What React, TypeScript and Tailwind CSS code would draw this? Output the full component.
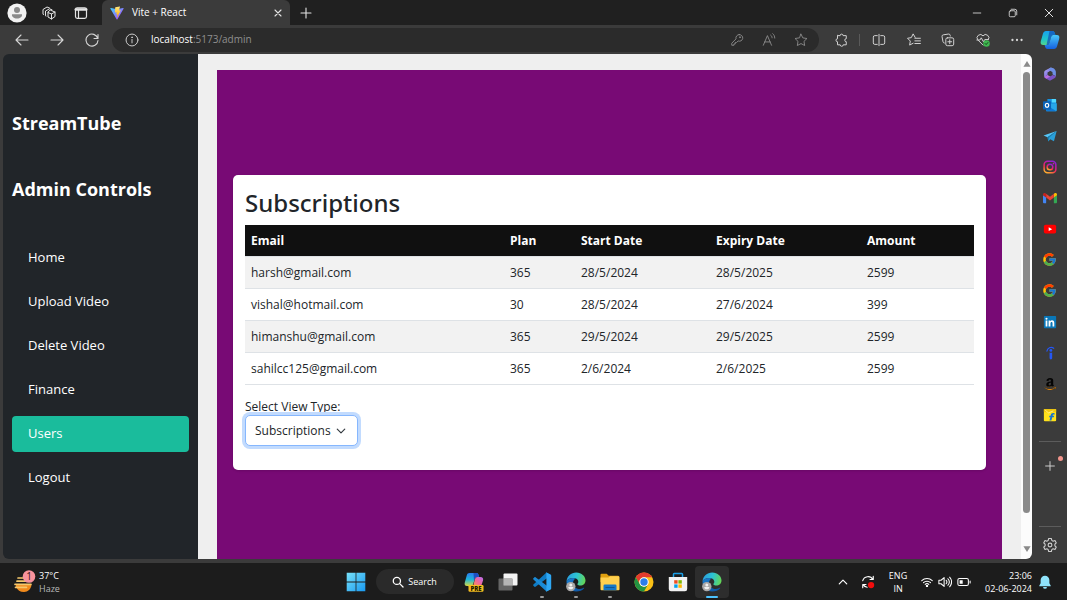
import { useState } from "react";
import type { ReactNode } from "react";
import { FcGoogle } from "react-icons/fc";
import { FaAmazon } from "react-icons/fa";

const navItems = ["Home", "Upload Video", "Delete Video", "Finance", "Users", "Logout"];

const subscriptions = [
  { email: "harsh@gmail.com", plan: "365", start: "28/5/2024", expiry: "28/5/2025", amount: "2599" },
  { email: "vishal@hotmail.com", plan: "30", start: "28/5/2024", expiry: "27/6/2024", amount: "399" },
  { email: "himanshu@gmail.com", plan: "365", start: "29/5/2024", expiry: "29/5/2025", amount: "2599" },
  { email: "sahilcc125@gmail.com", plan: "365", start: "2/6/2024", expiry: "2/6/2025", amount: "2599" },
];

/* ---------- line icons ---------- */

function Line({ children, className = "size-4", width = 1.1 }: { children: ReactNode; className?: string; width?: number }) {
  return (
    <svg viewBox="0 0 16 16" className={className} fill="none" stroke="currentColor" strokeWidth={width} strokeLinecap="round" strokeLinejoin="round" aria-hidden="true">
      {children}
    </svg>
  );
}

const AvatarIcon = () => (
  <svg viewBox="0 0 20 20" className="size-5" aria-hidden="true">
    <circle cx="10" cy="10" r="9.6" fill="#f2f2f2" />
    <circle cx="10" cy="7" r="3" fill="#8a8a8a" />
    <path d="M5 11.2h10c.4 2.600-1.800 4.300-5 4.300s-5.400-1.700-5-4.300z" fill="#8a8a8a" />
  </svg>
);

const WorkspacesIcon = () => (
  <Line width={1}>
    <path d="M9.500 5.200 14 7v4.500L10.500 14 7 12V7.500z" />
    <path d="M7 7.500 10.500 9 14 7M10.500 9v5" />
    <path d="M5 11 4.500 10.800V6L8.500 3.800l2.500 1M2.500 9.500 2 9.200V4.500L6 2l2.500 1" />
  </Line>
);

const TabActionsIcon = () => (
  <Line width={1.2}>
    <rect x="2.500" y="2.800" width="11" height="10.500" rx="1.800" />
    <path d="M2.800 4.500h10.400" strokeWidth="2.600" />
    <path d="M5.500 5v8" />
  </Line>
);

const ViteIcon = () => (
  <svg viewBox="0 0 32 32" className="size-3.5" aria-hidden="true">
    <defs>
      <linearGradient id="viteA" x1="0" y1="0" x2="1" y2="1">
        <stop offset="0" stopColor="#41d1ff" />
        <stop offset="1" stopColor="#bd34fe" />
      </linearGradient>
      <linearGradient id="viteB" x1="0" y1="0" x2="0" y2="1">
        <stop offset="0" stopColor="#ffea83" />
        <stop offset="1" stopColor="#ffa800" />
      </linearGradient>
    </defs>
    <path d="M31 6.500 17 30.300a1.100 1.100 0 0 1-2 0L1 6.500c-.5-.9.300-1.900 1.200-1.700l13.800 2.400 13.700-2.400c1-.2 1.800.8 1.300 1.700z" fill="url(#viteA)" />
    <path d="M22.500 1 12.300 3a.5.5 0 0 0-.4.400l-.6 11c0 .3.200.5.500.4l2.900-.7c.3 0 .5.200.5.500l-.9 4.300c0 .3.200.5.500.4l1.800-.5c.3-.1.500.1.500.4l-1.400 6.900c-.1.400.5.700.7.300l8-16c.1-.3-.1-.6-.4-.5l-2.900.5c-.3 0-.5-.2-.4-.5L22.900 1.400c0-.3-.1-.5-.4-.4z" fill="url(#viteB)" />
  </svg>
);

/* ---------- brand icons for the side bar ---------- */

const M365Icon = () => (
  <svg viewBox="0 0 16 16" className="size-3.5" aria-hidden="true">
    <defs>
      <linearGradient id="m365a" x1="0" y1="0" x2="1" y2="1">
        <stop offset="0" stopColor="#b8a5f5" />
        <stop offset="1" stopColor="#5b5fd6" />
      </linearGradient>
    </defs>
    <path d="M9 .6 3 3.600C1.800 4.300 1.300 5.200 1.300 6.500v4.800l4-2.300V6.200L12 2.300z" fill="url(#m365a)" />
    <path d="M9 .6c2.500.4 5.700 2 5.700 5v5L10.700 8.200V5.800L6 3.200z" fill="#6d8fe6" />
    <path d="M14.700 10.300c0 1-.5 1.700-1.300 2.200L9 15.200c-.8.400-1.600.3-2.300-.1l-4.600-2.700c-.5-.3-.8-.7-.8-1.300L5.300 9l2.900 1.700L10.700 9z" fill="#7a52c7" />
    <path d="M1.300 11.200 5.300 9l3 1.800-4.600 2.600z" fill="#b86fe0" />
    <path d="M5.500 6.400 8 5l2.600 1.400v2.800L8 10.600 5.500 9.200z" fill="#3b3b3b" />
  </svg>
);

const OutlookIcon = () => (
  <svg viewBox="0 0 16 16" className="size-3.5" aria-hidden="true">
    <path d="M5 1h9a1 1 0 0 1 1 1v6H5z" fill="#1490df" />
    <path d="M10 1h4a1 1 0 0 1 1 1v3h-5z" fill="#50d9ff" />
    <path d="M3.500 7 15.800 6v8a1.200 1.200 0 0 1-1.200 1.200H4.500a1 1 0 0 1-1-1z" fill="#28a8ea" />
    <path d="m3.500 8 12 7H4.500a1 1 0 0 1-1-1z" fill="#0f78d4" />
    <rect y="3.800" width="9.200" height="9.200" rx="1" fill="#0a63b8" />
    <ellipse cx="4.600" cy="8.400" rx="2" ry="2.200" fill="none" stroke="#fff" strokeWidth="1.400" />
  </svg>
);

const TelegramIcon = () => (
  <svg viewBox="0 0 16 16" className="size-3.5" aria-hidden="true">
    <path d="M15.600 2.200.6 7.500l4.600 1.800z" fill="#56c5f5" />
    <path d="m5.200 9.300.8 4.900 2.300-2.500 4.200 2.200 3.100-11.700z" fill="#2a9fd8" />
    <path d="M15.600 2.200 6.800 10 6 14.200l-.8-4.900z" fill="#1679ab" />
  </svg>
);

const InstagramIcon = () => (
  <svg viewBox="0 0 16 16" className="size-3.5" aria-hidden="true">
    <defs>
      <linearGradient id="insta" x1="0.200" y1="1" x2="0.700" y2="0">
        <stop offset="0" stopColor="#ffb52e" />
        <stop offset="0.350" stopColor="#f5384a" />
        <stop offset="0.650" stopColor="#d0199a" />
        <stop offset="1" stopColor="#8b22d6" />
      </linearGradient>
    </defs>
    <g fill="none" stroke="url(#insta)" strokeWidth="1.700">
      <rect x="1.300" y="1.300" width="13.400" height="13.400" rx="4" />
      <circle cx="8" cy="8" r="3.200" />
    </g>
    <circle cx="12" cy="4" r="1" fill="#c41fb0" />
  </svg>
);

const GmailIcon = () => (
  <svg viewBox="0 0 16 16" className="size-3.5" aria-hidden="true">
    <path d="M0 4.500 3.600 7v7H1.100A1.100 1.100 0 0 1 0 12.900z" fill="#4285f4" />
    <path d="M16 4.500 12.400 7v7h2.500a1.100 1.100 0 0 0 1.100-1.100z" fill="#34a853" />
    <path d="m12.400 3.200.9-.7c1.100-.8 2.700 0 2.700 1.400v.9l-3.600 2.700z" fill="#fbbc04" />
    <path d="M3.600 7.500V3.200L8 6.500l4.400-3.300v4.300L8 10.800z" fill="#ea4335" />
    <path d="M0 3.900v.9l3.600 2.700V3.200l-.9-.7C1.600 1.700 0 2.500 0 3.900z" fill="#c5221f" />
  </svg>
);

const YoutubeIcon = () => (
  <svg viewBox="0 0 16 16" className="size-3.5" aria-hidden="true">
    <rect x="1" y="3.200" width="14" height="10" rx="2" fill="#f00" />
    <path d="m6.500 6 4 2.200-4 2.200z" fill="#fff" />
  </svg>
);

const LinkedinIcon = () => (
  <svg viewBox="0 0 16 16" className="size-3.5" aria-hidden="true">
    <rect x="1" y="1" width="14" height="14" rx="1" fill="#0a77b8" />
    <circle cx="4" cy="4.200" r="1.200" fill="#fff" />
    <path d="M3 6.300h2V13H3zM6.400 6.300h1.900v.9c.4-.7 1.100-1.100 2-1.100 2 0 2.600 1.200 2.600 3.100V13h-2V9.600c0-1-.2-1.700-1.100-1.700s-1.300.7-1.300 1.700V13H6.400z" fill="#fff" />
  </svg>
);

const IndeedIcon = () => (
  <svg viewBox="0 0 16 16" className="size-3.5" aria-hidden="true">
    <path d="M4.500 5.800C5 2.500 9 .3 12.300 2.600" fill="none" stroke="#2557f5" strokeWidth="1.300" strokeLinecap="round" />
    <circle cx="9" cy="5" r="1.600" fill="#2557f5" />
    <path d="M7.500 7.500c.9.400 2.100.4 3 0v6.300a1.500 1.500 0 0 1-3 0z" fill="#2557f5" />
  </svg>
);

const AmazonIcon = () => (
  <span className="relative block size-3.5">
    <FaAmazon className="size-3.5 text-[#050505]" />
    <FaAmazon className="absolute inset-0 size-3.5 text-[#d98514] [clip-path:inset(74%_0_0_0)]" />
  </span>
);

const FlipkartIcon = () => (
  <svg viewBox="0 0 16 16" className="size-3.5" aria-hidden="true">
    <path d="M1 1.500h14V14a1.200 1.200 0 0 1-1.200 1.200H2.200A1.200 1.200 0 0 1 1 14z" fill="#ffe11b" />
    <path d="M1 1.500h14v3.300H1z" fill="#f3c80e" />
    <path d="m2.500 2.500 3.800 3 5.500-2.200" fill="none" stroke="#fff3a0" strokeWidth="0.900" />
    <path d="M13 5.800h-1.500c-1.500 0-2.300.8-2.600 2.200l-.2.900H7.300L7 10.500h1.400l-1 3.900h2.200l1-3.900h1.800l.4-1.600H11l.1-.6c.1-.5.400-.8.900-.8h1.500z" fill="#1673d1" />
  </svg>
);

const CopilotIcon = () => (
  <svg viewBox="0 0 20 20" className="size-5" aria-hidden="true">
    <defs>
      <linearGradient id="cop1" x1="0.200" y1="0" x2="0.200" y2="1">
        <stop offset="0" stopColor="#18a0f0" />
        <stop offset="0.600" stopColor="#20c5c8" />
        <stop offset="1" stopColor="#54d68b" />
      </linearGradient>
      <linearGradient id="cop2" x1="0.500" y1="0" x2="0.500" y2="1">
        <stop offset="0" stopColor="#48c8fa" />
        <stop offset="1" stopColor="#1560e0" />
      </linearGradient>
    </defs>
    <path d="M6 1h6.500c1.300 0 1.900.8 2.300 2l.6 2h-1.700c-1.400 0-2.200.6-2.600 2l-1.700 5.500C9 14 8.200 15 6.500 15H3.200C1 15 .2 13.300.8 11.200L3 3.500C3.500 1.900 4.500 1 6 1z" fill="url(#cop1)" />
    <path d="M14 19H7.500c-1.300 0-1.900-.8-2.300-2l-.6-2h1.900c1.700 0 2.500-.9 3-2.500L11.100 7c.4-1.400 1.200-2 2.600-2h3.100c2.200 0 3 1.700 2.400 3.800L17 16.500c-.5 1.600-1.500 2.500-3 2.500z" fill="url(#cop2)" />
    <path d="M9.500 1h3c1.300 0 1.900.8 2.300 2l.6 2h-1.700c-1.400 0-2.200.6-2.600 2L8.800 14c-.5.700-1.200 1-2.300 1z" fill="#1453b8" fillOpacity="0.750" />
  </svg>
);

/* ---------- task bar icons ---------- */

const HazeIcon = () => (
  <svg viewBox="0 0 24 24" className="size-6" aria-hidden="true">
    <path d="M4 15h15.500c-.6 4-3.500 7-7.500 7s-6.500-2-8-5z" fill="#f08a1c" />
    <g fill="none" stroke="#f5c76b" strokeWidth="1.700" strokeLinecap="round">
      <path d="M6 8h7M5 11.200h9M3 14.300h16M3.500 17.300h11" />
    </g>
    <circle cx="17" cy="6.500" r="6.300" fill="#f8929d" />
    <text x="17" y="10" textAnchor="middle" fontSize="10" fill="#3a1218" fontFamily="Open Sans, sans-serif">1</text>
  </svg>
);

const WindowsIcon = () => (
  <svg viewBox="0 0 20 20" className="size-5" aria-hidden="true">
    <defs>
      <linearGradient id="win" x1="0" y1="0" x2="20" y2="20" gradientUnits="userSpaceOnUse">
        <stop offset="0" stopColor="#7be4fa" />
        <stop offset="1" stopColor="#1496f0" />
      </linearGradient>
    </defs>
    <path d="M.7.700h8.900v8.900H.7zM10.400.7h8.900v8.900h-8.900zM.7 10.400h8.900v8.900H.7zM10.400 10.400h8.900v8.900h-8.900z" fill="url(#win)" />
  </svg>
);

const CopilotPreIcon = () => (
  <svg viewBox="0 0 20 20" className="size-5" aria-hidden="true">
    <defs>
      <linearGradient id="pre1" x1="0" y1="0" x2="0" y2="1">
        <stop offset="0" stopColor="#2a7cf0" />
        <stop offset="0.500" stopColor="#1fb6d8" />
        <stop offset="1" stopColor="#d5d942" />
      </linearGradient>
      <linearGradient id="pre2" x1="1" y1="0" x2="0" y2="1">
        <stop offset="0" stopColor="#b76bf5" />
        <stop offset="0.500" stopColor="#f0699a" />
        <stop offset="1" stopColor="#f99a4b" />
      </linearGradient>
    </defs>
    <path d="M5.500 1h7c1.200 0 1.800.8 2.100 2l.5 2h-2c-1.200 0-2 .7-2.400 2l-1.500 5c-.4 1.300-1.200 2-2.500 2H3C1 14 .2 12.500.8 10.600l2-7.400C3.200 1.900 4.200 1 5.500 1z" fill="url(#pre1)" />
    <path d="M9.500 1h3c1.200 0 1.800.8 2.100 2l.5 2h-2c-1.200 0-2 .7-2.400 2l-.7 2z" fill="#1d4fc4" />
    <path d="M9 14.500 11 7c.4-1.300 1.200-2 2.500-2h3c2.200 0 3 1.500 2.500 3.400l-2 6.100z" fill="url(#pre2)" />
    <rect x="4.500" y="13" width="15" height="6.800" rx="1.200" fill="#f5bd1f" />
    <text x="12" y="18.700" textAnchor="middle" fontSize="6" fontWeight="800" fill="#241b00" fontFamily="Open Sans, sans-serif">PRE</text>
  </svg>
);

const TaskViewIcon = () => (
  <svg viewBox="0 0 20 20" className="size-5" aria-hidden="true">
    <rect x="5.500" y="1.500" width="14" height="12" rx="1" fill="#f4f4f4" />
    <rect x="0.500" y="6.500" width="14" height="12" rx="1" fill="#6e6e6e" fillOpacity="0.900" />
    <path d="M5.500 6.500h9v7h-9z" fill="#b5b5b5" />
  </svg>
);

const VsCodeIcon = () => (
  <svg viewBox="0 0 20 20" className="size-5" aria-hidden="true">
    <path d="M14.500.6 1.400 12.500a.8.800 0 0 0 0 1.200l1.100 1c.3.300.7.300 1 .1L19 3.200z" fill="#0f7cc5" />
    <path d="M14.500 19.400 1.400 7.500a.8.800 0 0 1 0-1.200l1.100-1c.3-.3.700-.3 1-.1L19 16.800z" fill="#1a8ad6" />
    <path d="M14.500 19.500c-.5.200-1 .1-1.300-.3.500.4 1.200.1 1.200-.5V1.300c0-.6-.7-.9-1.200-.5.300-.4.800-.5 1.300-.3l4 1.900c.4.200.7.600.7 1.100v13c0 .5-.3.900-.7 1.100z" fill="#2fa8f4" />
  </svg>
);

const EdgeIcon = ({ id }: { id: string }) => (
  <svg viewBox="0 0 20 20" className="size-5" aria-hidden="true">
    <defs>
      <linearGradient id={`${id}a`} x1="0" y1="0.300" x2="1" y2="0.500">
        <stop offset="0" stopColor="#2b9be0" />
        <stop offset="0.500" stopColor="#2cc4d3" />
        <stop offset="1" stopColor="#63d657" />
      </linearGradient>
      <linearGradient id={`${id}b`} x1="0" y1="0" x2="1" y2="1">
        <stop offset="0" stopColor="#1b7fd0" />
        <stop offset="1" stopColor="#0c4f9c" />
      </linearGradient>
    </defs>
    <path d="M.5 9.500C1 4 5 .5 10.200.5c5.500 0 9.300 3.800 9.300 8 0 3-2.300 5-5.200 5-1.900 0-2.900-.7-2.900-1.300 0-.5.900-.9.900-2.400C12.300 7.500 10 6 7.200 6 3.800 6 1.300 7.500.5 9.500z" fill={`url(#${id}a)`} />
    <path d="M.5 9.500C1.300 7.300 4 6 7.200 6c1 0 2 .2 2.800.6-1.800.5-3 2.300-3 4.600 0 3.800 3.500 6 7 5.700 1.500-.1 2.700-.6 3.700-1.200.4-.2.700.1.400.5C16.500 18.300 13.500 19.500 10.300 19.500 4.800 19.500.5 15 .5 9.500z" fill={`url(#${id}b)`} />
    <circle cx="4.800" cy="14.600" r="4.700" fill="#aaa8a8" />
    <circle cx="4.800" cy="13" r="1.500" fill="#f0f0f0" />
    <path d="M2.300 15h5c.1 1.600-1 2.300-2.500 2.300S2.200 16.600 2.300 15z" fill="#f0f0f0" />
  </svg>
);

const FolderIcon = () => (
  <svg viewBox="0 0 20 20" className="size-5" aria-hidden="true">
    <path d="M.5 2.800A1 1 0 0 1 1.500 1.800h5.200l2 2H18a1 1 0 0 1 1 1V10H.5z" fill="#e0a010" />
    <path d="M.5 5.500h8L10 4.200h8.500a1 1 0 0 1 1 1v12a1 1 0 0 1-1 1h-17a1 1 0 0 1-1-1z" fill="#ffd04f" />
    <path d="M3.500 18.200v-4.500a1.200 1.200 0 0 1 1.200-1.200h10.600a1.200 1.200 0 0 1 1.200 1.200v4.500z" fill="#1478c8" />
    <path d="M5.500 15.500h9" stroke="#0d5596" strokeWidth="1" />
  </svg>
);

const ChromeIcon = () => (
  <svg viewBox="0 0 20 20" className="size-5" aria-hidden="true">
    <circle cx="10" cy="10" r="9.500" fill="#fbc116" />
    <path d="M10 .5a9.500 9.500 0 0 1 8.230 4.750H10A4.750 4.750 0 0 0 5.890 12.370L1.770 5.250A9.500 9.500 0 0 1 10 .5z" fill="#e33b2e" />
    <path d="M1.770 5.250 5.890 12.370A4.750 4.750 0 0 0 14.110 12.370L10 19.500A9.500 9.500 0 0 1 1.770 5.250z" fill="#229342" />
    <circle cx="10" cy="10" r="4.750" fill="#fff" />
    <circle cx="10" cy="10" r="3.700" fill="#2b7de9" />
  </svg>
);

const StoreIcon = () => (
  <svg viewBox="0 0 20 20" className="size-5" aria-hidden="true">
    <path d="M5.500 5.500V2.200c0-.5.300-.8.800-.8h7.400c.5 0 .8.300.8.800v3.300" fill="none" stroke="#1aa0e8" strokeWidth="1.500" />
    <path d="M.8 5h18.400v12a2.200 2.200 0 0 1-2.200 2.200H3A2.200 2.200 0 0 1 .8 17z" fill="#f2f2f2" />
    <path d="M6.200 8.200h3.400v3.400H6.200z" fill="#f04e1f" />
    <path d="M10.400 8.200h3.400v3.400h-3.400z" fill="#7cb800" />
    <path d="M6.200 12.400h3.400v3.400H6.200z" fill="#00a3ee" />
    <path d="M10.400 12.400h3.400v3.400h-3.400z" fill="#fdb700" />
  </svg>
);

/* ---------- browser chrome ---------- */

function IconButton({ label, className = "", children }: { label: string; className?: string; children: ReactNode }) {
  return (
    <button type="button" aria-label={label} className={`flex shrink-0 items-center justify-center ${className}`}>
      {children}
    </button>
  );
}

function TitleBar() {
  return (
    <header className="flex h-[25px] shrink-0 items-stretch bg-[#202020] text-[#e4e4e4]">
      <div className="flex w-[102px] items-center">
        <IconButton label="Profile" className="w-[34px]"><AvatarIcon /></IconButton>
        <IconButton label="Workspaces" className="w-[30px]"><WorkspacesIcon /></IconButton>
        <IconButton label="Tab actions" className="w-[34px]"><TabActionsIcon /></IconButton>
      </div>
      <div className="flex w-[188px] items-center gap-2 rounded-t-md bg-[#3b3b3b] pr-1 pl-2">
        <ViteIcon />
        <span className="flex-1 text-[10px] text-white">Vite + React</span>
        <IconButton label="Close tab" className="w-4">
          <Line className="size-3" width={1.500}><path d="m4 4 8 8M12 4l-8 8" /></Line>
        </IconButton>
      </div>
      <IconButton label="New tab" className="w-8">
        <Line><path d="M8 3v10M3 8h10" /></Line>
      </IconButton>
      <div className="ml-auto flex">
        <IconButton label="Minimize" className="w-9"><Line className="size-3"><path d="M3 8h10" /></Line></IconButton>
        <IconButton label="Restore" className="w-9">
          <Line className="size-3"><rect x="3" y="5" width="8" height="8" rx="1.500" /><path d="M5.500 3h5A2.500 2.500 0 0 1 13 5.500v5" /></Line>
        </IconButton>
        <IconButton label="Close" className="w-9"><Line className="size-3" width={1.300}><path d="m3 3 10 10M13 3 3 13" /></Line></IconButton>
      </div>
    </header>
  );
}

function Toolbar() {
  return (
    <div className="flex h-[29px] shrink-0 items-center pl-1 text-[#d6d6d6]">
      <IconButton label="Back" className="w-[35px]"><Line><path d="M14 8H2M7 3 2 8l5 5" /></Line></IconButton>
      <IconButton label="Forward" className="w-[35px]"><Line><path d="M2 8h12M9 3l5 5-5 5" /></Line></IconButton>
      <IconButton label="Refresh" className="w-[35px]">
        <Line><path d="M13.800 6.500A6 6 0 1 0 14 8.500M14 2.500v4h-4" /></Line>
      </IconButton>
      <form className="ml-[3px] flex h-6 flex-1 items-center rounded-full bg-[#2b2b2b] text-[#8f8f8f]" onSubmit={(e) => e.preventDefault()}>
        <IconButton label="Site information" className="w-[39px] text-[#cfcfcf]">
          <Line className="size-3.5"><circle cx="8" cy="8" r="6.800" /><path d="M8 7.300v4" /><circle cx="8" cy="4.900" r="0.400" fill="currentColor" /></Line>
        </IconButton>
        <a href="#admin" className="flex-1 text-[10px] whitespace-nowrap">
          <span className="text-white">localhost</span>:5173/admin
        </a>
        <IconButton label="Saved passwords" className="w-8">
          <Line className="size-3.5" width={1}><path d="M10.500 1.800a3.800 3.800 0 1 1-1.200 7.300L7.500 10.800H6v1.700H4.500V14H2v-2.300L6.900 6.700a3.800 3.800 0 0 1 3.600-4.900z" /><circle cx="11.300" cy="4.800" r="0.500" /></Line>
        </IconButton>
        <IconButton label="Read aloud" className="w-8">
          <Line className="size-3.5" width={1}><path d="m1.500 14 4.700-11 4.700 11M3.100 10.200h6.200M10 2.500c1 .8 1.500 1.800 1.500 3M12.300.8c1.500 1.200 2.300 3 2.300 5" /></Line>
        </IconButton>
        <IconButton label="Add to favorites" className="mr-0.5 w-8">
          <Line className="size-3.5" width={1}><path d="m8 1.300 2.100 4.300 4.700.7-3.400 3.300.8 4.700L8 12.100l-4.200 2.200.8-4.700L1.200 6.300l4.700-.7z" /></Line>
        </IconButton>
      </form>
      <div className="flex items-center">
        <IconButton label="Extensions" className="w-10 pl-1">
          <Line className="size-3.5"><path d="M5 3h2a1.700 1.700 0 1 1 3.400 0H14v3.500a1.700 1.700 0 1 0 0 3.400V13.500h-3.500a1.700 1.700 0 0 1-3.400 0H4V10a1.700 1.700 0 1 1 0-3.400V3z" /></Line>
        </IconButton>
        <span className="h-3 w-px bg-[#5a5a5a]" />
        <IconButton label="Split screen" className="w-[37px]">
          <Line className="size-3.5"><path d="M6 3H3.200A1.700 1.700 0 0 0 1.500 4.700v6.600A1.700 1.700 0 0 0 3.200 13H6M10 3h2.800a1.700 1.700 0 0 1 1.700 1.700v6.600a1.700 1.700 0 0 1-1.700 1.700H10M8 1.500v13" /></Line>
        </IconButton>
        <IconButton label="Favorites" className="w-[34px]">
          <Line className="size-3.5"><path d="M9.300 5 7 1 4.900 5.300.6 6l3.200 3.200-.8 4.600 4-2.100M9 6h6.300M9 9h6.300M9 12h6.300" /></Line>
        </IconButton>
        <IconButton label="Collections" className="w-[34px]">
          <Line className="size-3.5"><rect x="5.500" y="5.500" width="9" height="9" rx="1.800" /><path d="M10 7.800v4.400M7.800 10h4.400M3.800 11.500A1.800 1.800 0 0 1 2.300 10L1.200 4.200A1.800 1.800 0 0 1 2.700 2.100L8.500 1.200a1.800 1.800 0 0 1 2 1.500l.1.800" /></Line>
        </IconButton>
        <IconButton label="Browser essentials" className="w-[35px]">
          <svg viewBox="0 0 16 16" className="size-3.5" fill="none" stroke="currentColor" strokeWidth="1.100" strokeLinecap="round" strokeLinejoin="round" aria-hidden="true">
            <path d="M8 13.800 2 7.800a3.600 3.600 0 0 1 6-4.500 3.600 3.600 0 0 1 6 4.500M1 8h3.500L6 5.500 8.500 10 10 7.500h4" />
            <circle cx="12" cy="12" r="3.700" fill="#3fb950" stroke="none" />
            <path d="m10.400 12 1.200 1.200 2-2.300" stroke="#173d1d" />
          </svg>
        </IconButton>
        <IconButton label="Settings and more" className="w-[33px]">
          <svg viewBox="0 0 16 16" className="size-3.5" fill="currentColor" aria-hidden="true"><circle cx="2.800" cy="8" r="1.300" /><circle cx="8" cy="8" r="1.300" /><circle cx="13.200" cy="8" r="1.300" /></svg>
        </IconButton>
        <IconButton label="Copilot" className="w-[34px]"><CopilotIcon /></IconButton>
      </div>
    </div>
  );
}

const sideApps = [
  { label: "Microsoft 365", icon: <M365Icon /> },
  { label: "Outlook", icon: <OutlookIcon /> },
  { label: "Telegram", icon: <TelegramIcon /> },
  { label: "Instagram", icon: <InstagramIcon /> },
  { label: "Gmail", icon: <GmailIcon /> },
  { label: "YouTube", icon: <YoutubeIcon /> },
  { label: "Google", icon: <FcGoogle className="size-[15px]" /> },
  { label: "Google search", icon: <FcGoogle className="size-[15px]" /> },
  { label: "LinkedIn", icon: <LinkedinIcon /> },
  { label: "Indeed", icon: <IndeedIcon /> },
  { label: "Amazon", icon: <AmazonIcon /> },
  { label: "Flipkart", icon: <FlipkartIcon /> },
];

function SideApps() {
  return (
    <aside className="flex w-[35px] shrink-0 flex-col items-center pt-1 text-[#d0d0d0]">
      {sideApps.map((app) => (
        <IconButton key={app.label} label={app.label} className="h-[31px] w-full">{app.icon}</IconButton>
      ))}
      <span className="mt-[11px] h-px w-[22px] bg-[#5c5c5c]" />
      <div className="relative mt-2">
        <IconButton label="Add app" className="h-8 w-[35px]"><Line className="size-3.5"><path d="M8 3v10M3 8h10" /></Line></IconButton>
        <span className="absolute top-1.5 right-1 size-[5px] rounded-full bg-[#f2958c]" />
      </div>
      <span className="mt-auto h-px w-[22px] bg-[#5c5c5c]" />
      <IconButton label="Sidebar settings" className="h-8 w-full pt-1">
        <Line>
          <path d="M6.700 1.500h2.600l.5 1.900 1.300.8 1.900-.6 1.300 2.300-1.400 1.300v1.600l1.400 1.300-1.300 2.300-1.900-.6-1.300.8-.5 1.900H6.700l-.5-1.900-1.300-.8-1.900.6-1.300-2.300 1.400-1.300V7.200L1.700 5.900 3 3.600l1.900.6 1.300-.8z" />
          <circle cx="8" cy="8" r="1.900" />
        </Line>
      </IconButton>
    </aside>
  );
}

/* ---------- admin page ---------- */

function AdminNav() {
  const [active, setActive] = useState("Users");
  return (
    <nav className="flex w-[195px] shrink-0 flex-col bg-[#212529] px-[9px] pt-[55px] text-white">
      <h3 className="text-lg leading-7 font-bold">StreamTube</h3>
      <h3 className="mt-[38px] text-lg leading-7 font-bold">Admin Controls</h3>
      <ul className="mt-[37px] flex flex-col gap-2">
        {navItems.map((item) => (
          <li key={item}>
            <a
              href="#admin"
              onClick={() => setActive(item)}
              className={`flex h-9 items-center rounded-sm px-4 text-[13px] ${item === active ? "bg-[#1abc9c]" : ""}`}
            >
              {item}
            </a>
          </li>
        ))}
      </ul>
    </nav>
  );
}

function SubscriptionsCard() {
  const [view, setView] = useState("Subscriptions");
  return (
    <section className="w-full rounded-[5px] bg-white px-3 pt-[13px] pb-6 text-[#212529] shadow-sm">
      <h2 className="mb-[7px] font-['Noto_Sans','Open_Sans',sans-serif] text-2xl leading-[30px] font-medium">Subscriptions</h2>
      <table className="w-full table-fixed border-collapse text-left text-xs">
        <colgroup>
          <col />
          <col className="w-[71px]" />
          <col className="w-[135px]" />
          <col className="w-[151px]" />
          <col className="w-[113px]" />
        </colgroup>
        <thead>
          <tr className="h-8 border-b border-[#dee2e6] bg-[#101010] text-white">
            {["Email", "Plan", "Start Date", "Expiry Date", "Amount"].map((title) => (
              <th key={title} scope="col" className="px-1.5 font-bold">{title}</th>
            ))}
          </tr>
        </thead>
        <tbody>
          {subscriptions.map((row) => (
            <tr key={row.email} className="h-8 border-b border-[#dee2e6] odd:bg-[#f2f2f2]">
              <td className="px-1.5">{row.email}</td>
              <td className="px-1.5">{row.plan}</td>
              <td className="px-1.5">{row.start}</td>
              <td className="px-1.5">{row.expiry}</td>
              <td className="px-1.5">{row.amount}</td>
            </tr>
          ))}
        </tbody>
      </table>
      <label htmlFor="view-type" className="mt-[13px] block text-xs leading-[17px]">Select View Type:</label>
      <div className="relative w-[113px]">
        <select
          id="view-type"
          value={view}
          onChange={(e) => setView(e.target.value)}
          className="block h-[31px] w-full appearance-none rounded-[5px] border border-[#86b7fe] bg-white pl-[9px] text-xs ring-3 ring-[#c2dbfe] outline-none"
        >
          <option>Subscriptions</option>
          <option>Users</option>
        </select>
        <span className="pointer-events-none absolute inset-y-0 right-3 flex items-center text-[#343a40]">
          <Line className="size-2.5" width={1.900}><path d="m2 5 6 6 6-6" /></Line>
        </span>
      </div>
    </section>
  );
}

function ScrollBar() {
  return (
    <div className="flex w-[11px] shrink-0 flex-col items-center bg-[#fcfcfc] pt-1.5 pb-1.5 text-[#8a8a8a]" aria-hidden="true">
      <svg viewBox="0 0 8 8" className="size-2" fill="currentColor"><path d="M4 1 7.600 6.800H.4z" /></svg>
      <div className="mt-1 mb-8 w-[7px] flex-1 rounded-full bg-[#8a8a8a]" />
      <svg viewBox="0 0 8 8" className="size-2" fill="currentColor"><path d="M4 7 7.600 1.200H.4z" /></svg>
    </div>
  );
}

/* ---------- task bar ---------- */

function TaskButton({ label, state = "idle", children }: { label: string; state?: "idle" | "open" | "active"; children: ReactNode }) {
  return (
    <button
      type="button"
      aria-label={label}
      className={`relative flex h-8 w-[34px] items-center justify-center rounded ${state === "active" ? "bg-[#2d2d2d]" : ""}`}
    >
      {children}
      {state !== "idle" && (
        <span className={`absolute bottom-0 h-0.5 rounded-full ${state === "active" ? "w-3 bg-[#4cc2ff]" : "w-1 bg-[#9a9a9a]"}`} />
      )}
    </button>
  );
}

function TaskBar() {
  return (
    <footer className="grid h-[37px] shrink-0 grid-cols-[1fr_auto_1fr] items-center bg-[#1c1c1c] text-[9px] leading-[13px] text-white">
      <button type="button" className="flex items-center gap-[3px] justify-self-start pl-3 text-left">
        <HazeIcon />
        <span className="flex flex-col">
          <span>37°C</span>
          <span className="text-[#b8b8b8]">Haze</span>
        </span>
      </button>
      <div className="flex items-center">
        <TaskButton label="Start"><WindowsIcon /></TaskButton>
        <button type="button" className="mx-[3px] flex h-[25px] w-[78px] items-center justify-center gap-1 rounded-full bg-[#2a2a2a] text-[9px]">
          <Line className="size-3" width={1.700}><circle cx="6.500" cy="6.500" r="4.800" /><path d="m10.200 10.200 4.500 4.500" /></Line>
          Search
        </button>
        <TaskButton label="Copilot preview"><CopilotPreIcon /></TaskButton>
        <TaskButton label="Task view"><TaskViewIcon /></TaskButton>
        <TaskButton label="Visual Studio Code" state="open"><VsCodeIcon /></TaskButton>
        <TaskButton label="Microsoft Edge profile" state="open"><EdgeIcon id="edgeOne" /></TaskButton>
        <TaskButton label="File Explorer" state="open"><FolderIcon /></TaskButton>
        <TaskButton label="Google Chrome"><ChromeIcon /></TaskButton>
        <TaskButton label="Microsoft Store"><StoreIcon /></TaskButton>
        <TaskButton label="Microsoft Edge" state="active"><EdgeIcon id="edgeTwo" /></TaskButton>
      </div>
      <div className="flex items-center justify-self-end pr-[15px]">
        <IconButton label="Hidden icons" className="w-6"><Line className="size-3" width={1.600}><path d="m3 10.500 5-5 5 5" /></Line></IconButton>
        <IconButton label="Update" className="w-[26px]">
          <svg viewBox="0 0 16 16" className="size-3.5" fill="none" stroke="currentColor" strokeWidth="1.300" strokeLinecap="round" strokeLinejoin="round" aria-hidden="true">
            <path d="M2 6.500A6.300 6.300 0 0 1 13.500 5M14 1.500V5.200h-3.700M2 14.500v-3.700h3.700M2.500 11A6 6 0 0 0 7 14" />
            <circle cx="11.500" cy="11.500" r="3.600" fill="#f20d0d" stroke="none" />
          </svg>
        </IconButton>
        <span className="flex w-[34px] flex-col items-center"><span>ENG</span><span>IN</span></span>
        <span className="ml-1.5 flex items-center gap-[5px]">
          <Line className="size-3" width={1.400}><path d="M1 6.300a10 10 0 0 1 14 0M3.300 8.800a6.700 6.700 0 0 1 9.400 0M5.600 11.200a3.400 3.400 0 0 1 4.800 0" /><circle cx="8" cy="13.200" r="0.900" fill="currentColor" /></Line>
          <Line className="size-3.5" width={1.200}><path d="M1 6v4h2.500L7 13V3L3.500 6zM9.300 6a3 3 0 0 1 0 4M11.300 4.300a5.500 5.500 0 0 1 0 7.400M13.300 2.500a8 8 0 0 1 0 11" /></Line>
          <Line className="size-3.5" width={1.200}><rect x="1" y="4" width="12" height="8" rx="1.800" /><path d="M15 6.800v2.400" /><rect x="3" y="6" width="3.500" height="4" fill="currentColor" stroke="none" /></Line>
        </span>
        <time className="ml-3.5 flex flex-col items-end" dateTime="2024-06-02T23:06"><span>23:06</span><span>02-06-2024</span></time>
        <IconButton label="Notifications" className="ml-1.5">
          <svg viewBox="0 0 16 16" className="size-3.5" fill="#8fe3fb" aria-hidden="true"><path d="M8 .8a5 5 0 0 1 5 5v3.500l1.500 2.700v.8h-13V12L3 9.300V5.800a5 5 0 0 1 5-5zM5.800 13.600h4.400a2.200 2.200 0 0 1-4.400 0z" /></svg>
        </IconButton>
      </div>
    </footer>
  );
}

export default function App() {
  return (
    <div className="flex h-screen flex-col bg-[#3b3b3b] font-['Open_Sans','Noto_Sans',sans-serif]">
      <TitleBar />
      <Toolbar />
      <div className="flex min-h-0 flex-1 pb-1 pl-[3px]">
        <div className="flex min-w-0 flex-1 overflow-hidden rounded-md">
          <AdminNav />
          <main className="min-w-0 flex-1 overflow-hidden bg-[#efefef] px-[19px] pt-4">
            <div className="flex h-full min-h-[505px] items-center bg-[#780a75] px-4">
              <SubscriptionsCard />
            </div>
          </main>
          <ScrollBar />
        </div>
        <SideApps />
      </div>
      <TaskBar />
    </div>
  );
}
